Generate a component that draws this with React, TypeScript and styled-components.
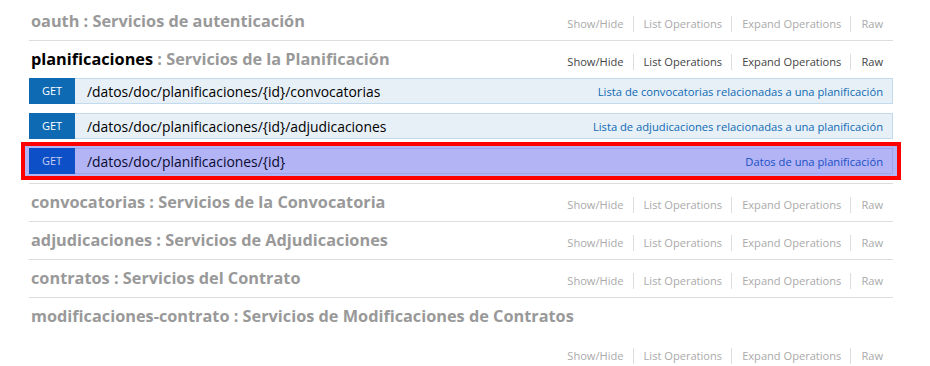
import styled, { createGlobalStyle } from "styled-components";

type Op = { path: string; summary: string; highlighted?: boolean };
type Res = { name: string; title: string; active?: boolean; ops?: Op[] };

const resources: Res[] = [
  { name: "oauth", title: "Servicios de autenticación" },
  {
    name: "planificaciones",
    title: "Servicios de la Planificación",
    active: true,
    ops: [
      {
        path: "/datos/doc/planificaciones/{id}/convocatorias",
        summary: "Lista de convocatorias relacionadas a una planificación",
      },
      {
        path: "/datos/doc/planificaciones/{id}/adjudicaciones",
        summary: "Lista de adjudicaciones relacionadas a una planificación",
      },
      {
        path: "/datos/doc/planificaciones/{id}",
        summary: "Datos de una planificación",
        highlighted: true,
      },
    ],
  },
  { name: "convocatorias", title: "Servicios de la Convocatoria" },
  { name: "adjudicaciones", title: "Servicios de Adjudicaciones" },
  { name: "contratos", title: "Servicios del Contrato" },
  {
    name: "modificaciones-contrato",
    title: "Servicios de Modificaciones de Contratos",
  },
];

const options = ["Show/Hide", "List Operations", "Expand Operations", "Raw"];

const GlobalStyle = createGlobalStyle`
  body {
    margin: 0;
    background: #fff;
    font-family: "Open Sans", "DejaVu Sans", sans-serif;
  }
`;

const Page = styled.ul`
  list-style: none;
  margin: 0;
  padding: 3px 0 0 29px;
  width: 864px;
`;

const Resource = styled.li`
  border-bottom: 1px solid #ddd;
`;

const Heading = styled.div`
  display: flex;
  flex-wrap: wrap;
  justify-content: space-between;
`;

const Title = styled.h2`
  margin: 0;
  padding: 10px 0 10px 2px;
  font-size: 16.3px;
  line-height: 17px;
  font-weight: 700;
  color: #999;
`;

const Name = styled.span<{ $active?: boolean }>`
  color: ${(p) => (p.$active ? "#000" : "#999")};
`;

const Options = styled.ul`
  list-style: none;
  display: flex;
  margin: 13px 0 6px auto;
  padding: 0;
`;

const Option = styled.li<{ $active?: boolean }>`
  padding: 0 9px 0 10px;
  height: 16px;
  line-height: 16px;
  font-size: 11.1px;
  color: ${(p) => (p.$active ? "#444" : "#aaa")};
  border-right: 1px solid #ddd;
  &:last-child {
    border-right: none;
    padding-right: 10px;
  }
`;

const Endpoints = styled.ul`
  list-style: none;
  margin: 0;
  padding: 0;
`;

const Endpoint = styled.li`
  margin-bottom: 9px;
`;

const Highlight = styled.div`
  margin: -6px -8px;
  padding: 2px 4px;
  border: 4px solid #ff0000;
  background: #b2b4f5;
`;

const Bar = styled.div<{ $hl?: boolean }>`
  display: flex;
  align-items: center;
  height: 26px;
  box-sizing: border-box;
  background: ${(p) => (p.$hl ? "#b2b4f5" : "#e7f0f7")};
  border: 1px solid ${(p) => (p.$hl ? "#9fa3ec" : "#c3d9ec")};
  border-left: none;
`;

const Verb = styled.span<{ $hl?: boolean }>`
  width: 46px;
  height: 26px;
  margin-top: -1px;
  margin-bottom: -1px;
  line-height: 26px;
  text-align: center;
  font-size: 11px;
  color: ${(p) => (p.$hl ? "#c8d0f0" : "#fff")};
  background: ${(p) => (p.$hl ? "#0c4fc6" : "#0f6ab4")};
`;

const Path = styled.span<{ $hl?: boolean }>`
  padding-left: 12px;
  font-size: 13.9px;
  color: ${(p) => (p.$hl ? "#0a0a30" : "#000")};
`;

const Summary = styled.span<{ $hl?: boolean }>`
  margin-left: auto;
  padding-right: 9px;
  font-size: 11.2px;
  color: ${(p) => (p.$hl ? "#1a4fc4" : "#0f6ab4")};
`;

const Operation = ({ op }: { op: Op }) => {
  const bar = (
    <Bar $hl={op.highlighted}>
      <Verb $hl={op.highlighted}>GET</Verb>
      <Path $hl={op.highlighted}>{op.path}</Path>
      <Summary $hl={op.highlighted}>{op.summary}</Summary>
    </Bar>
  );
  return (
    <Endpoint>{op.highlighted ? <Highlight>{bar}</Highlight> : bar}</Endpoint>
  );
};

export default function App() {
  return (
    <>
      <GlobalStyle />
      <Page>
        {resources.map((r) => (
          <Resource key={r.name}>
            <Heading>
              <Title>
                <Name $active={r.active}>{r.name}</Name> : {r.title}
              </Title>
              <Options>
                {options.map((o) => (
                  <Option key={o} $active={r.active}>
                    {o}
                  </Option>
                ))}
              </Options>
            </Heading>
            {r.ops && (
              <Endpoints>
                {r.ops.map((op) => (
                  <Operation key={op.path} op={op} />
                ))}
              </Endpoints>
            )}
          </Resource>
        ))}
      </Page>
    </>
  );
}
